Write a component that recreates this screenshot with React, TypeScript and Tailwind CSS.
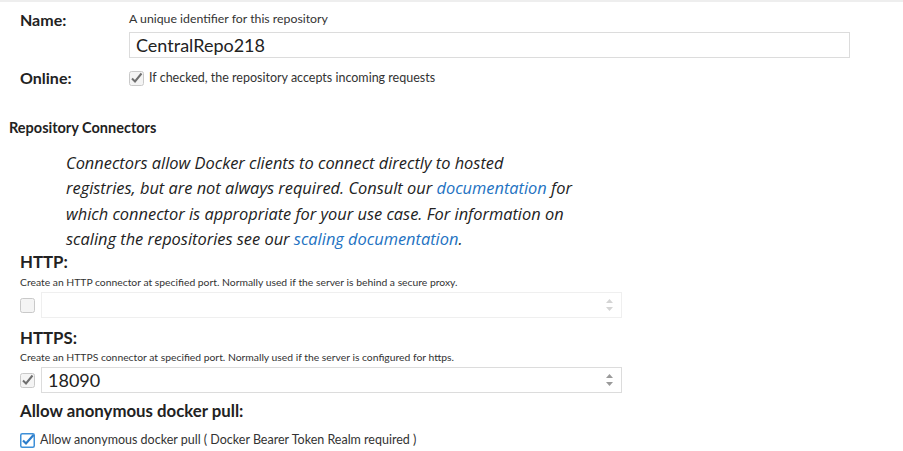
import React from "react";

const font = { fontFamily: "Lato, 'Open Sans', Arial, sans-serif" };
const para = { fontFamily: "'Open Sans', Lato, Arial, sans-serif" };

function GrayCheck({ checked }: { checked: boolean }) {
  return (
    <svg width="15" height="15" viewBox="0 0 15 15" className="shrink-0">
      <rect x="0.5" y="0.5" width="14" height="14" rx="2" fill="#f4f4f4" stroke="#c9c9c9" />
      {checked && (
        <path d="M3 7.5 L6 10.5 L12.5 2.5" fill="none" stroke="#6f6f6f" strokeWidth="2" />
      )}
    </svg>
  );
}

function BlueCheck() {
  return (
    <svg width="15" height="15" viewBox="0 0 15 15" className="shrink-0">
      <rect x="0.75" y="0.75" width="13.5" height="13.5" rx="1.5" fill="#fff" stroke="#3d8fd8" strokeWidth="1.5" />
      <path d="M3 7.5 L6 10.5 L13.5 2" fill="none" stroke="#2c7cc9" strokeWidth="2.2" />
    </svg>
  );
}

function Spinner({ light }: { light?: boolean }) {
  const c = light ? "#d4d4d4" : "#9a9a9a";
  return (
    <svg width="9" height="14" viewBox="0 0 9 14">
      <path d="M4.5 1 L8 5 L1 5 Z" fill={c} />
      <path d="M4.5 13 L8 9 L1 9 Z" fill={c} />
    </svg>
  );
}

export default function App() {
  return (
    <div className="w-[903px] h-[451px] bg-white text-[#222] overflow-hidden" style={font}>
      <div className="h-[2px] bg-[#eeeeee]" />
      <div className="pt-[9px]">
        {/* Name */}
        <div className="flex">
          <div className="w-[129px] pl-[20px] text-[16px] font-bold leading-[18px] text-[#222]">Name:</div>
          <div className="flex flex-col">
            <div className="text-[12.3px] leading-[16px] text-[#333]">A unique identifier for this repository</div>
            <div className="mt-[5px] w-[721px] h-[26px] border border-[#dcdcdc] flex items-center pl-[6px] text-[18px] text-[#222]">
              CentralRepo218
            </div>
          </div>
        </div>
        {/* Online */}
        <div className="flex mt-[11px] items-center">
          <div className="w-[129px] pl-[20px] text-[16px] font-bold leading-[18px] text-[#222]">Online:</div>
          <div className="flex items-center gap-[5px]">
            <GrayCheck checked />
            <span className="text-[12.5px] text-[#333]">If checked, the repository accepts incoming requests</span>
          </div>
        </div>

        <div className="mt-[32px] pl-[9px] text-[14.5px] font-bold text-[#222] leading-[16px]">Repository Connectors</div>

        <p className="mt-[14px] ml-[66px] italic text-[16.4px] leading-[25.4px] text-[#222]" style={para}>
          Connectors allow Docker clients to connect directly to hosted
          <br />
          registries, but are not always required. Consult our <span className="text-[#2372c2]">documentation</span> for
          <br />
          which connector is appropriate for your use case. For information on
          <br />
          scaling the repositories see our <span className="text-[#2372c2]">scaling documentation</span>.
        </p>

        {/* HTTP */}
        <div className="pl-[20px]">
          <div className="mt-[1px] text-[16.8px] font-bold leading-[20px] text-[#222]">HTTP:</div>
          <div className="mt-[3px] text-[10.35px] leading-[14px] text-[#333]">
            Create an HTTP connector at specified port. Normally used if the server is behind a secure proxy.
          </div>
          <div className="mt-[3px] flex items-center gap-[6px]">
            <GrayCheck checked={false} />
            <div className="w-[581px] h-[26px] border border-[#efefef] flex items-center justify-end pr-[7px]">
              <Spinner light />
            </div>
          </div>

          {/* HTTPS */}
          <div className="mt-[10px] text-[16.8px] font-bold leading-[20px] text-[#222]">HTTPS:</div>
          <div className="mt-[2px] text-[10.35px] leading-[14px] text-[#333]">
            Create an HTTPS connector at specified port. Normally used if the server is configured for https.
          </div>
          <div className="mt-[3px] flex items-center gap-[6px]">
            <GrayCheck checked />
            <div className="w-[581px] h-[26px] border border-[#dcdcdc] flex items-center justify-between pl-[6px] pr-[7px] text-[18px] text-[#222]">
              <span>18090</span>
              <Spinner />
            </div>
          </div>

          <div className="mt-[8px] text-[16.8px] font-bold leading-[20px] text-[#222]">Allow anonymous docker pull:</div>
          <div className="mt-[10px] flex items-center gap-[5px]">
            <BlueCheck />
            <span className="text-[12.5px] text-[#333]">Allow anonymous docker pull ( Docker Bearer Token Realm required )</span>
          </div>
        </div>
      </div>
    </div>
  );
}
